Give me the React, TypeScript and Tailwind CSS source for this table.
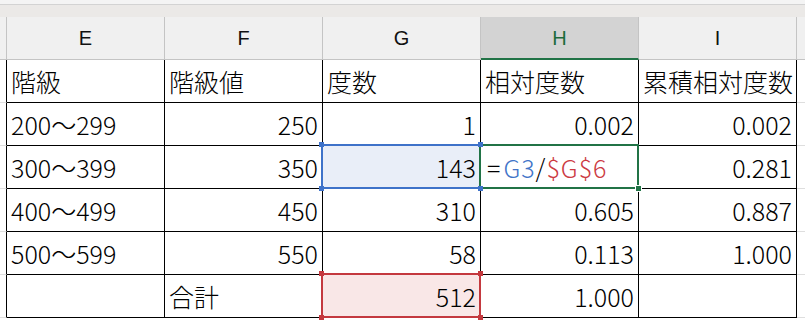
const cols = ['E', 'F', 'G', 'H', 'I']

type Cell = { text?: React.ReactNode; align?: 'left' | 'right' }

const rows: Cell[][] = [
  [{ text: '階級' }, { text: '階級値' }, { text: '度数' }, { text: '相対度数' }, { text: '累積相対度数' }],
  [{ text: '200～299' }, { text: '250', align: 'right' }, { text: '1', align: 'right' }, { text: '0.002', align: 'right' }, { text: '0.002', align: 'right' }],
  [{ text: '300～399' }, { text: '350', align: 'right' }, { text: '143', align: 'right' }, { text: '' }, { text: '0.281', align: 'right' }],
  [{ text: '400～499' }, { text: '450', align: 'right' }, { text: '310', align: 'right' }, { text: '0.605', align: 'right' }, { text: '0.887', align: 'right' }],
  [{ text: '500～599' }, { text: '550', align: 'right' }, { text: '58', align: 'right' }, { text: '0.113', align: 'right' }, { text: '1.000', align: 'right' }],
  [{ text: '' }, { text: '合計' }, { text: '512', align: 'right' }, { text: '1.000', align: 'right' }, { text: '' }],
]

const Corner = ({ pos, color }: { pos: string; color: string }) => (
  <div className={`absolute z-20 w-[5px] h-[5px] ${pos} ${color}`} />
)

const App = () => {
  return (
    <div className="w-[805px] h-[321px] bg-white overflow-hidden text-black font-['Noto_Sans_CJK_JP',sans-serif]">
      <div className="h-[4px] bg-[#f4f4f4]" />
      <div className="h-[13px] border-t border-[#d3d3d3] bg-[#ebe9e7]" />

      {/* column headers */}
      <div className="flex h-[43px]">
        <div className="w-[7px] shrink-0 bg-[#f0f0f0] border-r border-b border-[#c4c4c4]" />
        {cols.map((c) => (
          <div
            key={c}
            className={`w-[158px] shrink-0 flex items-center justify-center border-r ${
              c === 'H'
                ? 'bg-[#d3d3d3] text-[#1d6b3c] border-r-[#c4c4c4] border-b-2 border-b-[#217346]'
                : 'bg-[#f0f0f0] text-[#111] border-b border-[#c4c4c4]'
            }`}
          >
            <span className="font-['Liberation_Sans'] text-xl font-medium leading-none">{c}</span>
          </div>
        ))}
        <div className="flex-1 bg-[#f0f0f0] border-b border-[#c4c4c4]" />
      </div>

      {rows.map((row, ri) => (
        <div key={ri} className="flex h-[43px]">
          <div className="w-[7px] shrink-0 border-r border-black border-b border-b-[#dedede]" />
          {row.map((cell, ci) => {
            const isG3 = ri === 2 && ci === 2
            const isH3 = ri === 2 && ci === 3
            const isG6 = ri === 5 && ci === 2
            return (
              <div
                key={ci}
                className={`relative w-[158px] shrink-0 flex items-center whitespace-nowrap border-r border-b border-black text-[25px] font-light leading-none px-[4px] ${
                  cell.align === 'right' ? 'justify-end' : 'justify-start'
                } ${isG3 ? 'bg-[#e9eef8]' : ''} ${isG6 ? 'bg-[#f9e7e7]' : ''}`}
              >
                {isH3 ? (
                  <span className="pl-[2px] tracking-[1px]">
                    <span className="mr-[2px]">=</span>
                    <span className="text-[#4274c8]">G3</span>
                    <span>/</span>
                    <span className="text-[#cc3a42]">$G$6</span>
                  </span>
                ) : (
                  cell.text
                )}
                {isG3 && (
                  <>
                    <div className="absolute z-10 left-[-2px] top-[-2px] right-[-1px] bottom-[-1px] border-2 border-[#3e72c9]" />
                    <Corner pos="left-[-4px] top-[-4px]" color="bg-[#3e72c9]" />
                    <Corner pos="right-[-3px] top-[-4px]" color="bg-[#3e72c9]" />
                    <Corner pos="left-[-4px] bottom-[-3px]" color="bg-[#3e72c9]" />
                    <Corner pos="right-[-3px] bottom-[-3px]" color="bg-[#3e72c9]" />
                  </>
                )}
                {isH3 && (
                  <>
                    <div className="absolute z-10 left-[-2px] top-[-2px] right-[-1px] bottom-[-1px] border-2 border-[#217346]" />
                    <div className="absolute z-20 right-[-4px] bottom-[-4px] w-[7px] h-[7px] bg-[#217346] border border-white" />
                  </>
                )}
                {isG6 && (
                  <>
                    <div className="absolute z-10 left-[-2px] top-[-2px] right-[-1px] bottom-[-1px] border-2 border-[#c4393f]" />
                    <Corner pos="left-[-4px] top-[-4px]" color="bg-[#c4393f]" />
                    <Corner pos="right-[-3px] top-[-4px]" color="bg-[#c4393f]" />
                    <Corner pos="left-[-4px] bottom-[-3px]" color="bg-[#c4393f]" />
                    <Corner pos="right-[-3px] bottom-[-3px]" color="bg-[#c4393f]" />
                  </>
                )}
              </div>
            )
          })}
          <div className="flex-1 border-b border-[#dedede]" />
        </div>
      ))}
    </div>
  )
}

export default App
